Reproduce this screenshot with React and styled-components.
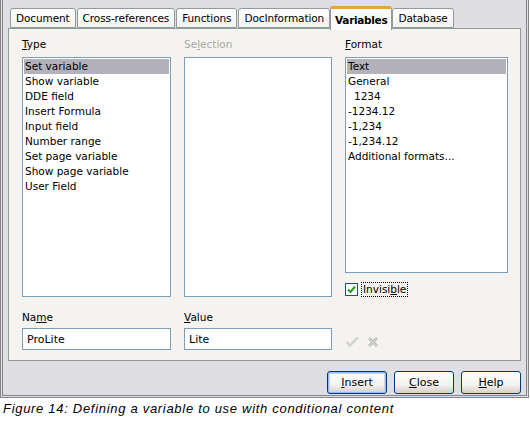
import React from 'react';
import styled, { createGlobalStyle } from 'styled-components';

const Global = createGlobalStyle`
body{margin:0;background:#fff;font-family:"Liberation Sans",Arial,sans-serif;}
`

const Window = styled.div`
box-sizing:border-box;
width:529px;
height:398px;
background:#dfdee3;
border:3px double #85848d;
border-top:none;
padding:6px 0 0 5px;
font-family:"DejaVu Sans",sans-serif;
font-size:10.5px;
color:#000;
`

const TabStrip = styled.div`
display:flex;
align-items:flex-end;
height:22px;
margin-left:2px;
position:relative;
z-index:1;
`

const Tab = styled.div`
box-sizing:border-box;
height:${p => p.active ? '24px' : '20px'};
padding:0 ${p => p.active ? '4px' : '5px'};
margin-right:${p => p.active ? '0' : '1px'};
margin-left:${p => p.active ? '-1px' : '0'};
margin-bottom:${p => p.active ? '-2px' : '0'};
display:flex;
align-items:center;
border:1px solid #919b9c;
border-bottom:${p => p.active ? 'none' : '1px solid #919b9c'};
border-top:${p => p.active ? '3px solid #e8a33c' : '1px solid #919b9c'};
border-radius:3px 3px 0 0;
background:${p => p.active ? '#fcfcfe' : 'linear-gradient(#ffffff,#f1f1ee)'};
font-weight:${p => p.active ? 'bold' : 'normal'};
font-size:10.5px;
letter-spacing:${p => p.active ? '-0.3px' : '-0.1px'};
white-space:nowrap;
`

const Panel = styled.div`
box-sizing:border-box;
width:513px;
height:333px;
border:1px solid #919b9c;
background:#f4f3ef;
padding:8px 12px 0 13px;
display:grid;
grid-template-columns:149px 148px 163px;
grid-template-rows:20px 240px 31px 22px;
column-gap:13px;
`

const Label = styled.div`
align-self:start;
padding-top:1px;
color:${p => p.disabled ? '#a9a8a4' : '#000'};
`

const BottomLabel = styled(Label)`
align-self:end;
padding-bottom:5px;
`

const U = styled.span`
text-decoration:underline;
`

const ListBox = styled.div`
box-sizing:border-box;
height:${p => p.h || 240}px;
background:#fff;
border:1px solid #7f9db9;
padding:1px;
`

const Item = styled.div`
height:15px;
line-height:15px;
padding-left:${p => p.indent ? 7 : 1}px;
background:${p => p.selected ? '#b3b2bc' : 'transparent'};
white-space:nowrap;
`

const FormatCol = styled.div`
display:flex;
flex-direction:column;
`

const CheckRow = styled.div`
display:flex;
align-items:center;
margin-top:9px;
gap:3px;
`

const CheckBox = styled.div`
box-sizing:border-box;
width:13px;
height:13px;
border:1px solid #1c5180;
background:#fff;
display:flex;
align-items:center;
justify-content:center;
`

const CheckLabel = styled.span`
border:1px dotted #000;
padding:0 1px;
line-height:13px;
`

const Input = styled.div`
box-sizing:border-box;
height:22px;
border:1px solid #7f9db9;
background:#fff;
padding-left:4px;
display:flex;
align-items:center;
font-size:11px;
`

const Icons = styled.div`
display:flex;
align-items:flex-end;
gap:8px;
padding-bottom:2px;
`

const ButtonRow = styled.div`
display:flex;
justify-content:flex-end;
gap:7px;
width:513px;
margin-top:10px;
`

const Button = styled.div`
box-sizing:border-box;
width:60px;
height:23px;
border:1px solid #003c74;
border-radius:3px;
background:linear-gradient(#ffffff 0%,#f3f3ef 60%,#d6d0c5 100%);
box-shadow:${p => p.primary ? 'inset 0 0 0 1px #9bb7ee, inset 0 0 0 2px #c5d6f6' : 'none'};
display:flex;
align-items:center;
justify-content:center;
font-size:11px;
`

const Caption = styled.div`
font-family:"Liberation Sans",Arial,sans-serif;
font-style:italic;
font-size:13px;
letter-spacing:0.7px;
padding:3px 0 0 3px;
color:#000;
`

const typeItems = ['Set variable', 'Show variable', 'DDE field', 'Insert Formula', 'Input field', 'Number range', 'Set page variable', 'Show page variable', 'User Field']
const formatItems = ['Text', 'General', '1234', '-1234.12', '-1,234', '-1,234.12', 'Additional formats...']

const tabs = ['Document', 'Cross-references', 'Functions', 'DocInformation', 'Variables', 'Database']

const App = () => {
    return <>
        <Global />
        <Window>
            <TabStrip>
                {tabs.map(t => <Tab key={t} active={t === 'Variables'}>{t}</Tab>)}
            </TabStrip>
            <Panel>
                <Label><U>T</U>ype</Label>
                <Label disabled>Se<U>l</U>ection</Label>
                <Label><U>F</U>ormat</Label>

                <ListBox>
                    {typeItems.map((t, i) => <Item key={t} selected={i === 0}>{t}</Item>)}
                </ListBox>
                <ListBox />
                <FormatCol>
                    <ListBox h={219}>
                        {formatItems.map((t, i) => <Item key={t} selected={i === 0} indent={t === '1234'}>{t}</Item>)}
                    </ListBox>
                    <CheckRow>
                        <CheckBox>
                            <svg width="9" height="9" viewBox="0 0 9 9">
                                <path d="M1 4.5 L3.5 7 L8 1.5" stroke="#21a121" strokeWidth="2" fill="none" />
                            </svg>
                        </CheckBox>
                        <CheckLabel>Invisi<U>b</U>le</CheckLabel>
                    </CheckRow>
                </FormatCol>

                <BottomLabel>Na<U>m</U>e</BottomLabel>
                <BottomLabel><U>V</U>alue</BottomLabel>
                <div />

                <Input>ProLite</Input>
                <Input>Lite</Input>
                <Icons>
                    <svg width="14" height="12" viewBox="0 0 14 12">
                        <path d="M1.5 6 L5 9.5 L12.5 1.5" stroke="#c8c8c8" strokeWidth="2.4" fill="none" />
                        <path d="M1.5 6 L5 9.5 L12.5 1.5" stroke="#e4e4e4" strokeWidth="0.8" fill="none" />
                    </svg>
                    <svg width="12" height="12" viewBox="0 0 12 12">
                        <path d="M2 2 L10 10 M10 2 L2 10" stroke="#b8b8b8" strokeWidth="2.6" fill="none" />
                        <path d="M2 2 L10 10 M10 2 L2 10" stroke="#dedede" strokeWidth="0.9" fill="none" />
                    </svg>
                </Icons>
            </Panel>
            <ButtonRow>
                <Button primary><U>I</U>nsert</Button>
                <Button><U>C</U>lose</Button>
                <Button><U>H</U>elp</Button>
            </ButtonRow>
        </Window>
        <Caption>Figure 14: Defining a variable to use with conditional content</Caption>
    </>;
};

export default App;
